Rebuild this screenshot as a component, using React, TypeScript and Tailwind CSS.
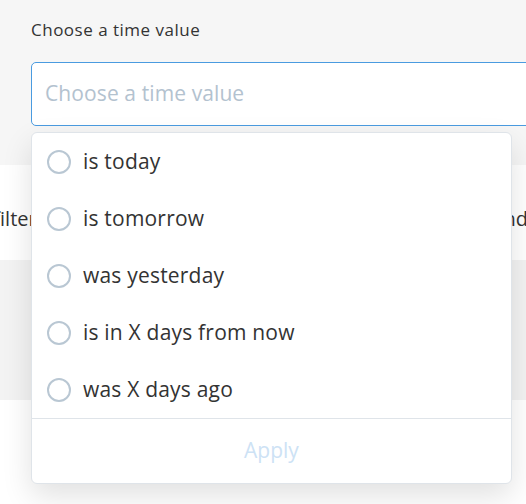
import { useState } from "react";

const options = [
  "is today",
  "is tomorrow",
  "was yesterday",
  "is in X days from now",
  "was X days ago",
];

function Radio({ checked }: { checked: boolean }) {
  return (
    <span className="flex h-[24px] w-[24px] shrink-0 items-center justify-center rounded-full border-2 border-[#b9c7d3] bg-white">
      {checked && <span className="h-[10px] w-[10px] rounded-full bg-[#4a9be0]" />}
    </span>
  );
}

export default function App() {
  const [selected, setSelected] = useState<string | null>(null);

  return (
    <div className="relative h-[504px] w-[526px] overflow-hidden bg-white font-['Open_Sans','Lato',sans-serif] text-[#333]">
      {/* page behind the dropdown */}
      <div className="h-[165px] bg-[#f6f6f6] pl-[31px] pt-[18px]">
        <label className="block text-[17px] leading-[24px] tracking-[0.5px] text-[#333]">Choose a time value</label>
        <div className="-mr-[10px] mt-[20px] flex h-[64px] items-center rounded-[5px] border border-[#4a9be0] bg-white pl-[13px] text-[21px] tracking-[0.1px] text-[#b3c2cf]">
          Choose a time value
        </div>
      </div>
      <div className="flex h-[95px] items-center justify-between bg-white pt-[12px] text-[20px] font-medium">
        <span className="-ml-[49px]">Add filter</span>
        <span className="-mr-[2px]">and</span>
      </div>
      <div className="h-[140px] bg-[#f3f3f3]" />

      {/* dropdown */}
      <div className="absolute left-[31px] top-[132px] w-[481px] rounded-[6px] border border-[#dfe4e9] bg-white shadow-[0_12px_30px_rgba(0,0,0,0.12)]">
        <ul>
          {options.map((o) => (
            <li
              key={o}
              onClick={() => setSelected(o)}
              className="flex h-[57px] cursor-pointer items-center gap-[12px] pl-[15px] text-[21px] tracking-[0.2px] text-[#333]"
            >
              <Radio checked={selected === o} />
              <span>{o}</span>
            </li>
          ))}
        </ul>
        <div className="border-t border-[#dfe4e9]">
          <button
            type="button"
            disabled={!selected}
            className="h-[64px] w-full text-center text-[21px] text-[#cde2f5]"
          >
            Apply
          </button>
        </div>
      </div>
    </div>
  );
}
